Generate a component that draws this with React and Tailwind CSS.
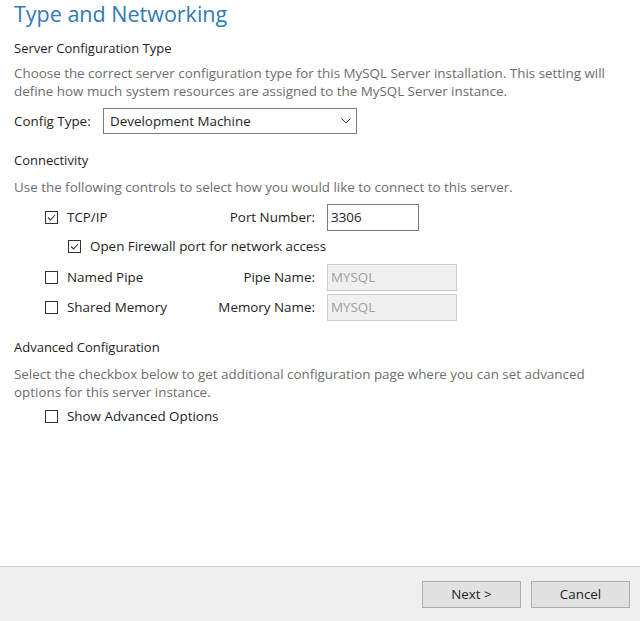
import React from 'react'

const font = { fontFamily: '"Open Sans", "Noto Sans", sans-serif' }

const Check = ({ checked }) => (
    <span className="flex h-[13px] w-[13px] shrink-0 items-center justify-center border border-[#333333] bg-white">
        {checked ? (
            <svg width="11" height="11" viewBox="0 0 11 11">
                <path d="M2 5.5 L4.5 8 L9 3" fill="none" stroke="#333333" strokeWidth="1.1" />
            </svg>
        ) : null}
    </span>
)

const Row = ({ checked, label, field, value, disabled, top }) => (
    <div className={`flex h-[27px] items-center pl-[31px] ${top}`}>
        <div className="flex w-[155px] items-center gap-[9px]">
            <Check checked={checked} />
            <span>{label}</span>
        </div>
        <div className="w-[115px] text-right">{field}</div>
        <div
            className={`ml-[12px] flex h-[27px] items-center px-[3px] border ${
                disabled
                    ? 'w-[130px] border-[#cccccc] bg-[#f0f0f0] text-[#a0a0a0]'
                    : 'w-[92px] border-[#7a7a7a] bg-white text-[#1e1e1e]'
            }`}
        >
            {value}
        </div>
    </div>
)

export default function App() {
    return (
        <div
            className="flex h-[621px] w-[640px] flex-col bg-white text-[13.4px] text-[#1e1e1e]"
            style={font}
        >
            <div className="flex-1 pl-[14px]">
                <h1 className="h-[28px] text-[21.5px] leading-[28px] text-[#2d7bb5]">Type and Networking</h1>

                <p className="mt-[10px] h-[20px] leading-[20px] text-[13px]">Server Configuration Type</p>
                <p className="mt-[6px] w-[610px] leading-[18px] text-[#6d6d6d]">
                    Choose the correct server configuration type for this MySQL Server installation. This setting will
                    define how much system resources are assigned to the MySQL Server instance.
                </p>

                <div className="mt-[8px] flex h-[26px] items-center">
                    <span className="w-[89px]">Config Type:</span>
                    <div className="flex h-[26px] w-[254px] items-center justify-between border border-[#7a7a7a] pl-[6px] pr-[5px]">
                        <span>Development Machine</span>
                        <svg width="10" height="6" viewBox="0 0 10 6">
                            <path d="M0.5 0.5 L5 5 L9.5 0.5" fill="none" stroke="#333333" strokeWidth="1" />
                        </svg>
                    </div>
                </div>

                <p className="mt-[16px] h-[20px] leading-[20px] text-[13px]">Connectivity</p>
                <p className="mt-[8px] leading-[18px] text-[#6d6d6d]">
                    Use the following controls to select how you would like to connect to this server.
                </p>

                <Row checked label="TCP/IP" field="Port Number:" value="3306" top="mt-[8px]" />
                <div className="mt-[5px] flex h-[20px] items-center gap-[9px] pl-[54px]">
                    <Check checked />
                    <span>Open Firewall port for network access</span>
                </div>
                <Row label="Named Pipe" field="Pipe Name:" value="MYSQL" disabled top="mt-[8px]" />
                <Row label="Shared Memory" field="Memory Name:" value="MYSQL" disabled top="mt-[3px]" />

                <p className="mt-[16px] h-[20px] leading-[20px] text-[13px]">Advanced Configuration</p>
                <p className="mt-[8px] w-[610px] leading-[18px] text-[#6d6d6d]">
                    Select the checkbox below to get additional configuration page where you can set advanced
                    options for this server instance.
                </p>
                <div className="mt-[5px] flex h-[20px] items-center gap-[9px] pl-[31px]">
                    <Check />
                    <span>Show Advanced Options</span>
                </div>
            </div>

            <div className="flex h-[55px] justify-end gap-[10px] border-t border-[#d0d0d0] bg-[#efefef] pr-[10px] pt-[14px]">
                <button className="h-[27px] w-[99px] border border-[#adadad] bg-[#e1e1e1]">Next &gt;</button>
                <button className="h-[27px] w-[99px] border border-[#adadad] bg-[#e1e1e1]">Cancel</button>
            </div>
        </div>
    )
}
